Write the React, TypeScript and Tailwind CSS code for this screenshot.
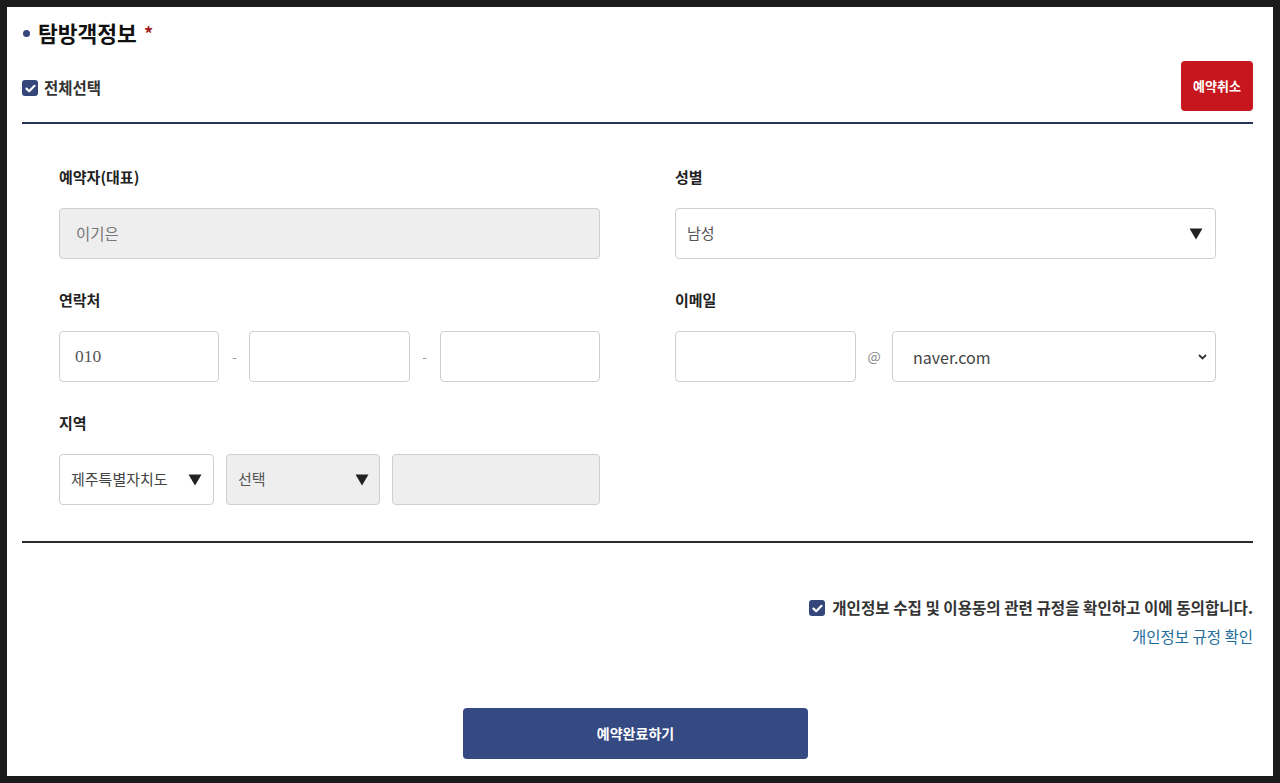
import React from "react";

const KR = { fontFamily: '"Noto Sans CJK KR", "Noto Sans", sans-serif' };

function Check({ className = "" }: { className?: string }) {
  return (
    <span className={`inline-flex h-[16px] w-[16px] shrink-0 items-center justify-center rounded-[3px] bg-[#34467a] ${className}`}>
      <svg width="11" height="9" viewBox="0 0 11 9" fill="none">
        <path d="M1.5 4.6 L4.2 7.2 L9.5 1.8" stroke="#fff" strokeWidth="2.2" strokeLinecap="round" strokeLinejoin="round" />
      </svg>
    </span>
  );
}

function Tri() {
  return (
    <svg width="14" height="12" viewBox="0 0 14 12">
      <path d="M0.5 0.5 H13.5 L7 11.5 Z" fill="#222" />
    </svg>
  );
}

function Label({ children }: { children: React.ReactNode }) {
  return <div className="h-[22px] text-[15px] leading-[22px] font-bold text-[#222]">{children}</div>;
}

export default function App() {
  return (
    <div className="h-[783px] w-full bg-[#1b1b1b] p-[7px]" style={KR}>
      <div className="flex h-full flex-col bg-white pt-[11px] pl-[15px] pr-[20px]">
        {/* title */}
        <div className="flex h-[30px] items-center">
          <span className="ml-[1px] h-[7px] w-[7px] rounded-full bg-[#34467a]" />
          <span className="ml-[8px] text-[21.5px] font-bold leading-[30px] text-[#111]">탐방객정보</span>
          <span className="ml-[7px] text-[18px] font-bold leading-[30px] text-[#a31f24]">*</span>
        </div>
        {/* select all + cancel */}
        <div className="mt-[13px] flex h-[50px] items-center justify-between">
          <div className="flex items-center pt-[4px]">
            <Check />
            <span className="ml-[6px] text-[15.5px] font-bold text-[#333]">전체선택</span>
          </div>
          <button className="h-[50px] w-[72px] rounded-[4px] bg-[#c8161e] text-[13px] font-bold text-white">
            예약취소
          </button>
        </div>
        <div className="mt-[11px] h-[2px] bg-[#28335a]" />

        {/* form */}
        <div className="grid grid-cols-2 gap-x-[75px] gap-y-[30px] px-[37px] pt-[42px] pb-[36px]">
          <div>
            <Label>예약자(대표)</Label>
            <div className="mt-[20px] flex h-[51px] items-center rounded-[4px] border border-[#cfcfcf] bg-[#eeeeee] pl-[16px] text-[15.5px] text-[#777]">
              이기은
            </div>
          </div>
          <div>
            <Label>성별</Label>
            <div className="mt-[20px] flex h-[51px] items-center justify-between rounded-[4px] border border-[#cfcfcf] bg-white pl-[11px] pr-[12px] text-[15px] text-[#555]">
              <span>남성</span>
              <Tri />
            </div>
          </div>
          <div>
            <Label>연락처</Label>
            <div className="mt-[20px] grid h-[51px] grid-cols-[1fr_30px_1fr_30px_1fr]">
              <div
                className="flex items-center rounded-[4px] border border-[#cfcfcf] bg-white pl-[15px] text-[17.5px] text-[#555]"
                style={{ fontFamily: '"Liberation Serif", serif' }}
              >
                010
              </div>
              <div className="flex items-center justify-center text-[14px] text-[#999]">-</div>
              <div className="rounded-[4px] border border-[#cfcfcf] bg-white" />
              <div className="flex items-center justify-center text-[14px] text-[#999]">-</div>
              <div className="rounded-[4px] border border-[#cfcfcf] bg-white" />
            </div>
          </div>
          <div>
            <Label>이메일</Label>
            <div className="mt-[20px] flex h-[51px] items-stretch">
              <div className="w-[181px] shrink-0 rounded-[4px] border border-[#cfcfcf] bg-white" />
              <div className="flex w-[36px] shrink-0 items-center justify-center text-[14px] text-[#888]">@</div>
              <div className="flex flex-1 items-center justify-between rounded-[4px] border border-[#cfcfcf] bg-white pl-[20px] pr-[8px] text-[16px] text-[#444]">
                <span>naver.com</span>
                <svg width="9" height="6" viewBox="0 0 9 6">
                  <path d="M1 1 L4.5 4.5 L8 1" stroke="#333" strokeWidth="1.8" fill="none" />
                </svg>
              </div>
            </div>
          </div>
          <div>
            <Label>지역</Label>
            <div className="mt-[20px] flex h-[51px] items-stretch gap-[12px]">
              <div className="flex w-[155px] shrink-0 items-center justify-between rounded-[4px] border border-[#cfcfcf] bg-white pl-[11px] pr-[11px] text-[15px] text-[#444]">
                <span>제주특별자치도</span>
                <Tri />
              </div>
              <div className="flex w-[154px] shrink-0 items-center justify-between rounded-[4px] border border-[#cfcfcf] bg-[#eeeeee] pl-[11px] pr-[10px] text-[15px] text-[#555]">
                <span>선택</span>
                <Tri />
              </div>
              <div className="flex-1 rounded-[4px] border border-[#cfcfcf] bg-[#eeeeee]" />
            </div>
          </div>
          <div />
        </div>
        <div className="h-[2px] bg-[#2a2a2a]" />

        {/* agreement */}
        <div className="mt-[54px] flex h-[22px] items-center justify-end">
          <Check />
          <span className="ml-[7px] text-[15.6px] font-bold text-[#333]">
            개인정보 수집 및 이용동의 관련 규정을 확인하고 이에 동의합니다.
          </span>
        </div>
        <div className="mt-[6px] h-[22px] text-right text-[15.5px] leading-[22px] text-[#236d9c]">
          개인정보 규정 확인
        </div>
        <div className="mt-[61px] flex justify-center pr-[4px]">
          <button className="h-[51px] w-[345px] rounded-[4px] bg-[#354a82] text-[14px] font-bold text-white">
            예약완료하기
          </button>
        </div>
      </div>
    </div>
  );
}
